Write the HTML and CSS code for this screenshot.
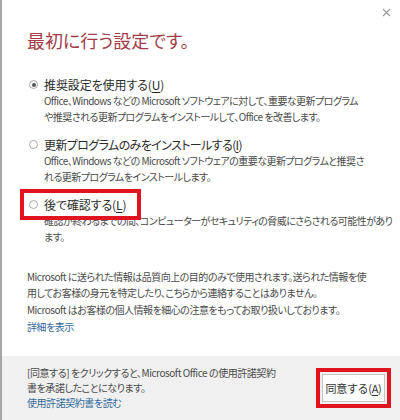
FILE: index.html
```html
<!DOCTYPE html>
<html lang="ja">
<head>
    <meta charset="UTF-8">
    <meta name="viewport" content="width=device-width, initial-scale=1.0">
    <title>最初に行う設定です。</title>
    <link rel="stylesheet" href="styles.css">
</head>
<body>
    <div class="dialog">
        <button class="close" aria-label="閉じる">
            <svg width="9" height="9" viewBox="0 0 9 9"><path d="M1 1L8 8M8 1L1 8" stroke="#9a9a9a" stroke-width="1.1" fill="none"/></svg>
        </button>
        <main class="content">
            <h1>最初に行う設定です。</h1>
            <div class="options">
                <div class="option">
                    <label class="opt-label"><span class="radio checked"></span>推奨設定を使用する(<u>U</u>)</label>
                    <p class="desc">Office、Windows などの Microsoft ソフトウェアに対して、重要な更新プログラム<br>や推奨される更新プログラムをインストールして、Office を改善します。</p>
                </div>
                <div class="option">
                    <label class="opt-label kana"><span class="radio"></span>更新プログラムのみをインストールする(<u>I</u>)</label>
                    <p class="desc">Office、Windows などの Microsoft ソフトウェアの重要な更新プログラムと推奨さ<br>れる更新プログラムをインストールします。</p>
                </div>
                <div class="option">
                    <label class="opt-label marked"><span class="radio"></span>後で確認する(<u>L</u>)</label>
                    <p class="desc">確認が終わるまでの間、コンピューターがセキュリティの脅威にさらされる可能性があり<br>ます。</p>
                </div>
            </div>
            <div class="privacy">
                <p>Microsoft に送られた情報は品質向上の目的のみで使用されます。送られた情報を使<br>用してお客様の身元を特定したり、こちらから連絡することはありません。</p>
                <p>Microsoft はお客様の個人情報を細心の注意をもってお取り扱いしております。</p>
                <a href="#" class="link">詳細を表示</a>
            </div>
        </main>
        <footer class="footer">
            <div class="notice">
                <p>[同意する] をクリックすると、Microsoft Office の使用許諾契約<br>書を承諾したことになります。</p>
                <a href="#" class="link">使用許諾契約書を読む</a>
            </div>
            <div class="agree-wrap">
                <button class="agree">同意する(<u>A</u>)</button>
            </div>
        </footer>
    </div>
</body>
</html>
```

FILE: styles.css
```css
body {
    margin: 0;
    padding: 0;
    background-color: #fff;
    font-family: "Noto Sans CJK JP", "Noto Sans", sans-serif;
    font-feature-settings: "palt";
    color: #333;
}
.dialog {
    position: relative;
    width: 400px;
    height: 420px;
    box-sizing: border-box;
    border-left: 2px solid #a6a6a6;
    display: flex;
    flex-direction: column;
    overflow: hidden;
}
.close {
    position: absolute;
    top: 8px;
    right: 9px;
    border: none;
    background: none;
    padding: 0;
    line-height: 0;
}
.content {
    flex: 1;
    padding: 28px 0 0 25px;
}
h1 {
    margin: 0;
    font-size: 18px;
    font-weight: normal;
    line-height: 24px;
    color: #a23c48;
}
.options {
    margin-top: 24px;
    display: flex;
    flex-direction: column;
    gap: 11px;
}
.opt-label {
    display: flex;
    align-items: center;
    width: max-content;
    font-size: 12px;
    letter-spacing: -0.1px;
    line-height: 17px;
    color: #2b2b2b;
}
.opt-label.kana {
    letter-spacing: -0.6px;
}
.opt-label u {
    text-underline-offset: 2px;
}
.marked {
    outline: 4px solid #e0141e;
    outline-offset: 3px;
    padding-right: 8px;
}
.radio {
    width: 9px;
    height: 9px;
    box-sizing: border-box;
    border: 1px solid #a9a9a9;
    border-radius: 50%;
    margin: 0 6px 0 2px;
    display: flex;
    align-items: center;
    justify-content: center;
}
.radio.checked::after {
    content: "";
    width: 4px;
    height: 4px;
    border-radius: 50%;
    background-color: #555;
}
.desc {
    margin: 0 0 0 17px;
    font-size: 10px;
    letter-spacing: -0.55px;
    line-height: 16px;
    color: #4a4a4a;
    white-space: nowrap;
}
.privacy {
    margin-top: 24px;
    font-size: 10px;
    letter-spacing: -0.5px;
    line-height: 16px;
    color: #4a4a4a;
}
.privacy p {
    margin: 0 0 1px;
    white-space: nowrap;
}
.link {
    color: #33699a;
    text-decoration: none;
}
.footer {
    height: 64px;
    background-color: #f0f0f0;
    display: flex;
    align-items: flex-start;
    justify-content: space-between;
    padding: 9px 0 0 25px;
    box-sizing: border-box;
}
.notice {
    font-size: 10px;
    letter-spacing: -0.45px;
    line-height: 15px;
    color: #4a4a4a;
}
.notice p {
    margin: 0;
    white-space: nowrap;
}
.agree-wrap {
    margin: 9px 15px 0 0;
    outline: 4px solid #e0141e;
    outline-offset: 2px;
    padding: 0;
}
.agree {
    display: block;
    width: 63px;
    height: 28px;
    padding: 0;
    border: 1px solid #c4c4c4;
    background-color: #fdfdfd;
    font-family: inherit;
    font-size: 11px;
    letter-spacing: -0.3px;
    color: #333;
}
.agree u {
    text-underline-offset: 2px;
}
```
